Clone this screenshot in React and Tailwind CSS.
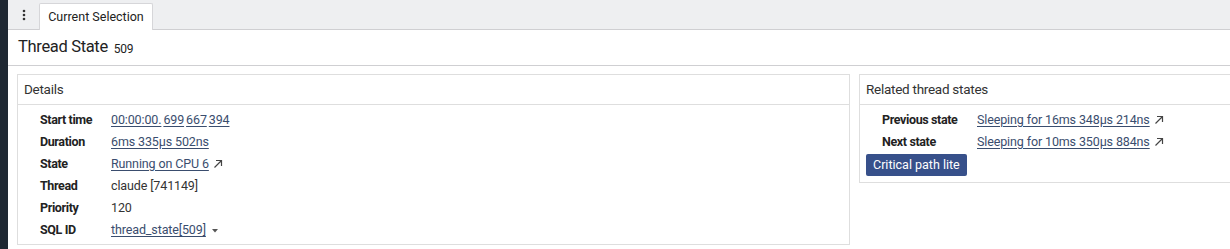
import React from 'react';

const font = { fontFamily: 'Roboto, "Liberation Sans", sans-serif' };

const ArrowUpRight = () => (
    <svg width="10" height="10" viewBox="0 0 10 10" className="ml-[4px] inline-block">
        <path d="M1.5 8.5 L8.5 1.5 M3 1.5 H8.5 V7" fill="none" stroke="#444" strokeWidth="1.2" />
    </svg>
);

const Link = ({ children, arrow }) => (
    <span className="inline-flex items-center">
        <span className="underline text-[#3a4d6e] underline-offset-2">{children}</span>
        {arrow && <ArrowUpRight />}
    </span>
);

const Row = ({ label, children, labelWidth }) => (
    <div className="flex items-center h-[22px]">
        <div className={`font-bold text-[#222] tracking-[-0.03em] ${labelWidth}`}>{label}</div>
        <div className="text-[#333] tracking-[-0.01em]">{children}</div>
    </div>
);

const Card = ({ title, className, children }) => (
    <div className={`border border-[#dedede] bg-white ${className}`}>
        <div className="h-[30px] flex items-center px-[6px] border-b border-[#dedede] text-[13.5px] tracking-[-0.02em] text-[#333]">
            {title}
        </div>
        {children}
    </div>
);

export default function App() {
    return (
        <div className="flex w-[1230px] h-[249px] overflow-hidden bg-white text-[12.5px]" style={font}>
            {/* barra lateral oscura */}
            <div className="w-[8px] shrink-0 bg-[#1f2833]"></div>

            <div className="flex-1 flex flex-col min-w-0">
                {/* pestañas */}
                <div className="h-[30px] shrink-0 flex items-end bg-[#eeeff1] border-b border-[#cfcfd2]">
                    <div className="w-[31px] h-full flex items-center justify-center">
                        <svg width="4" height="12" viewBox="0 0 4 12">
                            <circle cx="2" cy="2" r="1.3" fill="#333" />
                            <circle cx="2" cy="6" r="1.3" fill="#333" />
                            <circle cx="2" cy="10" r="1.3" fill="#333" />
                        </svg>
                    </div>
                    <div className="h-[27px] w-[114px] -mb-px bg-white border border-b-0 border-[#d6d6d9] rounded-t-[2px] flex items-center justify-center text-[12.5px] text-[#222]">
                        Current Selection
                    </div>
                </div>

                {/* título */}
                <div className="h-[36px] shrink-0 flex items-center pl-[10px] border-b border-[#cfcfd2]">
                    <span className="text-[16.5px] tracking-[-0.02em] text-[#222]">Thread State</span>
                    <span className="ml-[6px] text-[12px] tracking-[-0.02em] text-[#222] mt-[2px]">509</span>
                </div>

                <div className="flex gap-[9px] pl-[9px] pt-[8px]">
                    <Card title="Details" className="w-[833px] shrink-0 h-[171px]">
                        <div className="pl-[22px] pt-[4px]">
                            <Row label="Start time" labelWidth="w-[71px]">
                                <span className="underline text-[#3a4d6e] underline-offset-2">00:00:00.</span>
                                <span className="ml-[2px] underline text-[#3a4d6e] underline-offset-2">699</span>
                                <span className="ml-[2px] underline text-[#3a4d6e] underline-offset-2">667</span>
                                <span className="ml-[2px] underline text-[#3a4d6e] underline-offset-2">394</span>
                            </Row>
                            <Row label="Duration" labelWidth="w-[71px]">
                                <Link>6ms 335µs 502ns</Link>
                            </Row>
                            <Row label="State" labelWidth="w-[71px]">
                                <Link arrow>Running on CPU 6</Link>
                            </Row>
                            <Row label="Thread" labelWidth="w-[71px]">claude [741149]</Row>
                            <Row label="Priority" labelWidth="w-[71px]">120</Row>
                            <Row label="SQL ID" labelWidth="w-[71px]">
                                <span className="inline-flex items-center">
                                    <span className="underline text-[#3a4d6e] underline-offset-2">thread_state[509]</span>
                                    <svg width="6" height="4" viewBox="0 0 6 4" className="ml-[6px] mt-[2px]">
                                        <path d="M0 0 H6 L3 3.5 Z" fill="#555" />
                                    </svg>
                                </span>
                            </Row>
                        </div>
                    </Card>

                    <Card title="Related thread states" className="w-[420px] shrink-0 h-[109px]">
                        <div className="pl-[6px] pt-[4px]">
                            <div className="pl-[16px]">
                                <Row label="Previous state" labelWidth="w-[95px]">
                                    <Link arrow>Sleeping for 16ms 348µs 214ns</Link>
                                </Row>
                                <Row label="Next state" labelWidth="w-[95px]">
                                    <Link arrow>Sleeping for 10ms 350µs 884ns</Link>
                                </Row>
                            </div>
                            <button className="mt-px h-[22px] px-[7px] bg-[#37508a] text-white text-[12.5px] rounded-[2px]">
                                Critical path lite
                            </button>
                        </div>
                    </Card>
                </div>
            </div>
        </div>
    );
}
